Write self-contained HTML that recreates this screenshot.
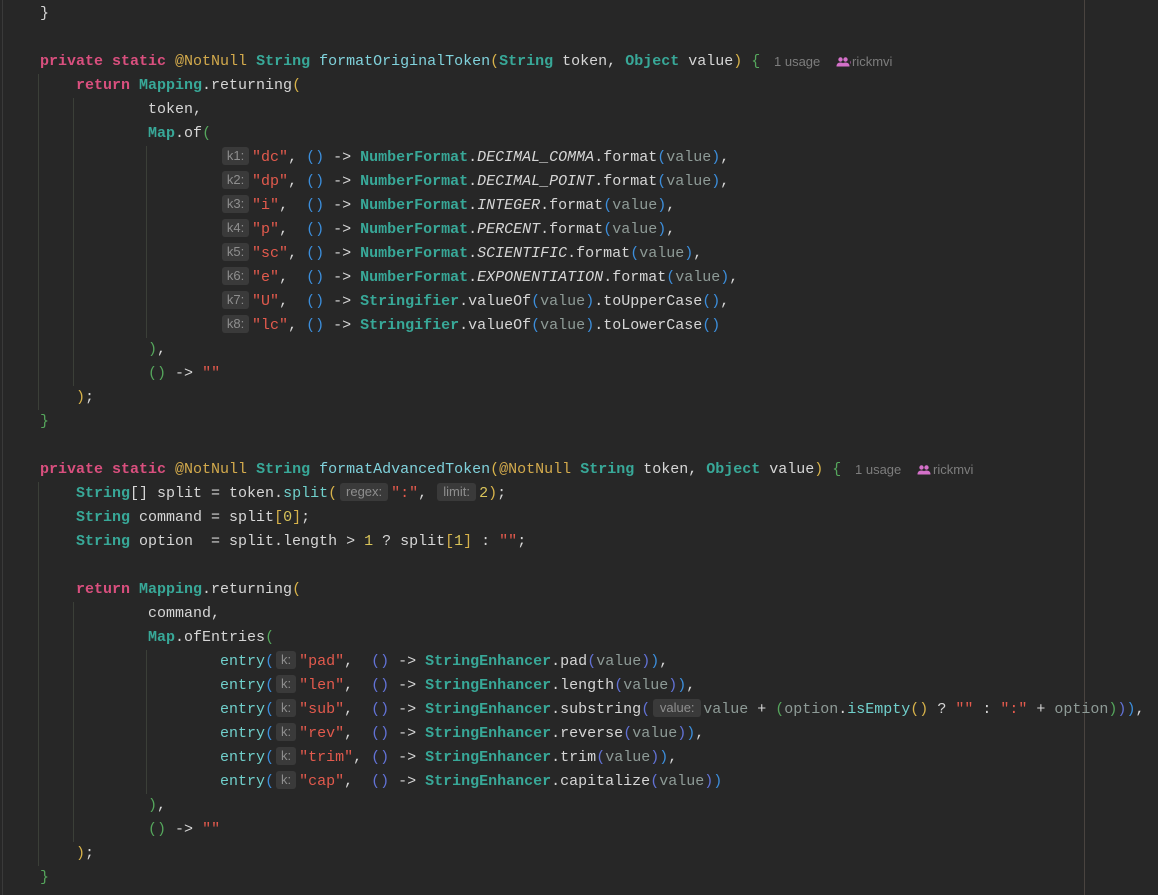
<!DOCTYPE html>
<html><head><meta charset="utf-8"><style>
html,body{margin:0;padding:0;}
body{width:1158px;height:895px;background:#272727;position:relative;overflow:hidden;font-family:"Liberation Mono","DejaVu Sans Mono",monospace;font-size:15px;color:#d6d6d6;}
.l{position:absolute;left:4px;height:24px;line-height:24px;white-space:pre;}
.k{color:#d94f7e;font-weight:bold}
.t{color:#38a898;font-weight:bold}
.a{color:#d3aa4c}
.f{color:#80d2dc}
.m{color:#70d0cc}
.v{color:#8e9b97}
.s{color:#e35a4d}
.n{color:#d9c45a}
.p1{color:#d7b24a}
.p2{color:#55a65c}
.p3{color:#3c8edb}
.p4{color:#6272d6}
.i{font-style:italic}
.h{display:inline-block;background:#3a3a3a;color:#8e8e8e;font-family:"Liberation Sans",sans-serif;font-size:13px;line-height:18px;height:18px;border-radius:3px;text-align:center;vertical-align:1px;}
.u{position:absolute;font-family:"Liberation Sans",sans-serif;font-size:13px;color:#7d7d7d;line-height:24px;}
.g{position:absolute;width:1px;background:#3b3f38;}
</style></head><body>
<div style="position:absolute;left:2px;top:0;width:1px;height:895px;background:#3a3a3a"></div>
<div style="position:absolute;left:1084px;top:0;width:1px;height:895px;background:#4a4440"></div>
<div class="g" style="left:38px;top:74px;height:336px"></div>
<div class="g" style="left:73px;top:98px;height:288px"></div>
<div class="g" style="left:146px;top:146px;height:192px"></div>
<div class="g" style="left:38px;top:482px;height:384px"></div>
<div class="g" style="left:73px;top:602px;height:240px"></div>
<div class="g" style="left:146px;top:650px;height:144px"></div>

<div class="l" style="top:2px">    }</div>
<div class="l" style="top:50px">    <span class="k">private static </span><span class="a">@NotNull</span> <span class="t">String</span> <span class="f">formatOriginalToken</span><span class="p1">(</span><span class="t">String</span> token, <span class="t">Object</span> value<span class="p1">)</span> <span class="p2">{</span></div>
<div class="u" style="left:774px;top:50px">1 usage</div>
<div class="u" style="left:836px;top:50px;color:#7d7d7d"><span style="color:#d46fc8">&#9679;&#9679;</span></div>
<div class="u" style="left:836px;top:50px;background:#272727;width:14px;height:24px"><svg width="14" height="24" viewBox="0 0 14 24"><circle cx="4.5" cy="9.5" r="2.2" fill="#d470c9"/><circle cx="9.5" cy="9.5" r="2.2" fill="#d470c9"/><path d="M0.5 16.5 Q0.5 12.5 4.5 12.5 Q8.5 12.5 8.5 16.5Z M5.5 16.5 Q5.5 12.5 9.5 12.5 Q13.5 12.5 13.5 16.5Z" fill="#d470c9"/></svg></div>
<div class="u" style="left:852px;top:50px">rickmvi</div>
<div class="l" style="top:74px">        <span class="k">return </span><span class="t">Mapping</span>.returning<span class="p1">(</span></div>
<div class="l" style="top:98px">                token,</div>
<div class="l" style="top:122px">                <span class="t">Map</span>.of<span class="p2">(</span></div>
<div class="l" style="top:146px">                        <span class="h" style="width:27px;margin:0 3px 0 2px">k1:</span><span class="s">"dc"</span>, <span class="p3">()</span> -&gt; <span class="t">NumberFormat</span>.<span class="i">DECIMAL_COMMA</span>.format<span class="p3">(</span><span class="v">value</span><span class="p3">)</span>,</div>
<div class="l" style="top:170px">                        <span class="h" style="width:27px;margin:0 3px 0 2px">k2:</span><span class="s">"dp"</span>, <span class="p3">()</span> -&gt; <span class="t">NumberFormat</span>.<span class="i">DECIMAL_POINT</span>.format<span class="p3">(</span><span class="v">value</span><span class="p3">)</span>,</div>
<div class="l" style="top:194px">                        <span class="h" style="width:27px;margin:0 3px 0 2px">k3:</span><span class="s">"i"</span>,  <span class="p3">()</span> -&gt; <span class="t">NumberFormat</span>.<span class="i">INTEGER</span>.format<span class="p3">(</span><span class="v">value</span><span class="p3">)</span>,</div>
<div class="l" style="top:218px">                        <span class="h" style="width:27px;margin:0 3px 0 2px">k4:</span><span class="s">"p"</span>,  <span class="p3">()</span> -&gt; <span class="t">NumberFormat</span>.<span class="i">PERCENT</span>.format<span class="p3">(</span><span class="v">value</span><span class="p3">)</span>,</div>
<div class="l" style="top:242px">                        <span class="h" style="width:27px;margin:0 3px 0 2px">k5:</span><span class="s">"sc"</span>, <span class="p3">()</span> -&gt; <span class="t">NumberFormat</span>.<span class="i">SCIENTIFIC</span>.format<span class="p3">(</span><span class="v">value</span><span class="p3">)</span>,</div>
<div class="l" style="top:266px">                        <span class="h" style="width:27px;margin:0 3px 0 2px">k6:</span><span class="s">"e"</span>,  <span class="p3">()</span> -&gt; <span class="t">NumberFormat</span>.<span class="i">EXPONENTIATION</span>.format<span class="p3">(</span><span class="v">value</span><span class="p3">)</span>,</div>
<div class="l" style="top:290px">                        <span class="h" style="width:27px;margin:0 3px 0 2px">k7:</span><span class="s">"U"</span>,  <span class="p3">()</span> -&gt; <span class="t">Stringifier</span>.valueOf<span class="p3">(</span><span class="v">value</span><span class="p3">)</span>.toUpperCase<span class="p3">()</span>,</div>
<div class="l" style="top:314px">                        <span class="h" style="width:27px;margin:0 3px 0 2px">k8:</span><span class="s">"lc"</span>, <span class="p3">()</span> -&gt; <span class="t">Stringifier</span>.valueOf<span class="p3">(</span><span class="v">value</span><span class="p3">)</span>.toLowerCase<span class="p3">()</span></div>
<div class="l" style="top:338px">                <span class="p2">)</span>,</div>
<div class="l" style="top:362px">                <span class="p2">()</span> -&gt; <span class="s">""</span></div>
<div class="l" style="top:386px">        <span class="p1">)</span>;</div>
<div class="l" style="top:410px">    <span class="p2">}</span></div>

<div class="l" style="top:458px">    <span class="k">private static </span><span class="a">@NotNull</span> <span class="t">String</span> <span class="f">formatAdvancedToken</span><span class="p1">(</span><span class="a">@NotNull</span> <span class="t">String</span> token, <span class="t">Object</span> value<span class="p1">)</span> <span class="p2">{</span></div>
<div class="u" style="left:855px;top:458px">1 usage</div>
<div class="u" style="left:917px;top:458px;width:14px;height:24px"><svg width="14" height="24" viewBox="0 0 14 24"><circle cx="4.5" cy="9.5" r="2.2" fill="#d470c9"/><circle cx="9.5" cy="9.5" r="2.2" fill="#d470c9"/><path d="M0.5 16.5 Q0.5 12.5 4.5 12.5 Q8.5 12.5 8.5 16.5Z M5.5 16.5 Q5.5 12.5 9.5 12.5 Q13.5 12.5 13.5 16.5Z" fill="#d470c9"/></svg></div>
<div class="u" style="left:933px;top:458px">rickmvi</div>
<div class="l" style="top:482px">        <span class="t">String</span>[] split = token.<span class="m">split</span><span class="p1">(</span><span class="h" style="width:48px;margin:0 3px 0 3px">regex:</span><span class="s">":"</span>, <span class="h" style="width:39px;margin:0 3px 0 1px">limit:</span><span class="n">2</span><span class="p1">)</span>;</div>
<div class="l" style="top:506px">        <span class="t">String</span> command = split<span class="p1">[</span><span class="n">0</span><span class="p1">]</span>;</div>
<div class="l" style="top:530px">        <span class="t">String</span> option  = split.length &gt; <span class="n">1</span> ? split<span class="p1">[</span><span class="n">1</span><span class="p1">]</span> : <span class="s">""</span>;</div>
<div class="l" style="top:578px">        <span class="k">return </span><span class="t">Mapping</span>.returning<span class="p1">(</span></div>
<div class="l" style="top:602px">                command,</div>
<div class="l" style="top:626px">                <span class="t">Map</span>.ofEntries<span class="p2">(</span></div>
<div class="l" style="top:650px">                        <span class="m">entry</span><span class="p3">(</span><span class="h" style="width:20px;margin:0 3px 0 2px">k:</span><span class="s">"pad"</span>,  <span class="p4">()</span> -&gt; <span class="t">StringEnhancer</span>.pad<span class="p4">(</span><span class="v">value</span><span class="p4">)</span><span class="p3">)</span>,</div>
<div class="l" style="top:674px">                        <span class="m">entry</span><span class="p3">(</span><span class="h" style="width:20px;margin:0 3px 0 2px">k:</span><span class="s">"len"</span>,  <span class="p4">()</span> -&gt; <span class="t">StringEnhancer</span>.length<span class="p4">(</span><span class="v">value</span><span class="p4">)</span><span class="p3">)</span>,</div>
<div class="l" style="top:698px">                        <span class="m">entry</span><span class="p3">(</span><span class="h" style="width:20px;margin:0 3px 0 2px">k:</span><span class="s">"sub"</span>,  <span class="p4">()</span> -&gt; <span class="t">StringEnhancer</span>.substring<span class="p4">(</span><span class="h" style="width:48px;margin:0 2px 0 3px">value:</span><span class="v">value</span> + <span class="p2">(</span><span class="v">option</span>.<span class="m">isEmpty</span><span class="p1">()</span> ? <span class="s">""</span> : <span class="s">":"</span> + <span class="v">option</span><span class="p2">)</span><span class="p4">)</span><span class="p3">)</span>,</div>
<div class="l" style="top:722px">                        <span class="m">entry</span><span class="p3">(</span><span class="h" style="width:20px;margin:0 3px 0 2px">k:</span><span class="s">"rev"</span>,  <span class="p4">()</span> -&gt; <span class="t">StringEnhancer</span>.reverse<span class="p4">(</span><span class="v">value</span><span class="p4">)</span><span class="p3">)</span>,</div>
<div class="l" style="top:746px">                        <span class="m">entry</span><span class="p3">(</span><span class="h" style="width:20px;margin:0 3px 0 2px">k:</span><span class="s">"trim"</span>, <span class="p4">()</span> -&gt; <span class="t">StringEnhancer</span>.trim<span class="p4">(</span><span class="v">value</span><span class="p4">)</span><span class="p3">)</span>,</div>
<div class="l" style="top:770px">                        <span class="m">entry</span><span class="p3">(</span><span class="h" style="width:20px;margin:0 3px 0 2px">k:</span><span class="s">"cap"</span>,  <span class="p4">()</span> -&gt; <span class="t">StringEnhancer</span>.capitalize<span class="p4">(</span><span class="v">value</span><span class="p4">)</span><span class="p3">)</span></div>
<div class="l" style="top:794px">                <span class="p2">)</span>,</div>
<div class="l" style="top:818px">                <span class="p2">()</span> -&gt; <span class="s">""</span></div>
<div class="l" style="top:842px">        <span class="p1">)</span>;</div>
<div class="l" style="top:866px">    <span class="p2">}</span></div>
</body></html>
